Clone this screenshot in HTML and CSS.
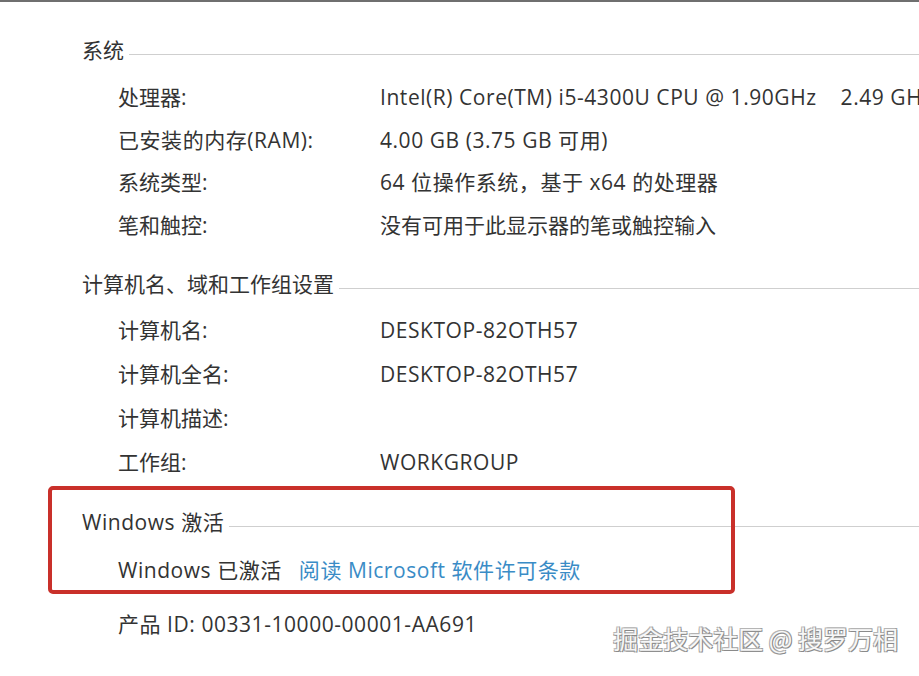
FILE: index.html
```html
<!DOCTYPE html>
<html lang="zh-CN">
<head>
<meta charset="utf-8">
<title>系统</title>
<link rel="stylesheet" href="styles.css">
</head>
<body>
<div class="page">

<div class="group">
<div class="heading"><span class="cjk">系统</span><i class="rule"></i></div>
<div class="rows tight">
<div class="row"><span class="key cjk">处理器:</span><span class="val">Intel(R) Core(TM) i5-4300U CPU @ 1.90GHz    2.49 GHz</span></div>
<div class="row"><span class="key">已安装的内存(RAM):</span><span class="val">4.00 GB (3.75 GB 可用)</span></div>
<div class="row"><span class="key cjk">系统类型:</span><span class="val">64 位操作系统，基于 x64 的处理器</span></div>
<div class="row"><span class="key cjk">笔和触控:</span><span class="val cjk">没有可用于此显示器的笔或触控输入</span></div>
</div>
</div>

<div class="group">
<div class="heading"><span class="cjk">计算机名、域和工作组设置</span><i class="rule"></i></div>
<div class="rows">
<div class="row"><span class="key cjk">计算机名:</span><span class="val">DESKTOP-82OTH57</span></div>
<div class="row"><span class="key cjk">计算机全名:</span><span class="val">DESKTOP-82OTH57</span></div>
<div class="row"><span class="key cjk">计算机描述:</span><span class="val"></span></div>
<div class="row"><span class="key cjk">工作组:</span><span class="val">WORKGROUP</span></div>
</div>
</div>

<div class="group activation">
<div class="marked"></div>
<div class="heading"><span>Windows 激活</span><i class="rule"></i></div>
<div class="rows">
<div class="row single">Windows 已激活<a class="link" href="#">阅读 Microsoft 软件许可条款</a></div>
<div class="row single">产品 ID: 00331-10000-00001-AA691</div>
</div>
</div>

</div>
<div class="watermark">掘金技术社区 @ 搜罗万相</div>
</body>
</html>
```

FILE: styles.css
```css
html, body {
margin: 0;
padding: 0;
background: #fff;
}
body {
border-top: 2px solid #6f6f6f;
height: 674px;
overflow: hidden;
position: relative;
font-family: "Open Sans", "Noto Sans CJK SC", sans-serif;
font-size: 21px;
letter-spacing: 0.55px;
color: #333;
}
.cjk {
letter-spacing: 0;
}
.page {
padding: 33px 0 0 82px;
}
.group {
margin-bottom: 23px;
}
.heading {
display: flex;
align-items: center;
height: 30px;
line-height: 30px;
white-space: nowrap;
}
.rule {
flex: 1;
height: 1px;
margin: 8px 0 0 5px;
background: #cfcfcf;
}
.rows {
padding: 9px 0 0 36px;
}
.tight {
padding-top: 11px;
}
.row {
display: grid;
grid-template-columns: 262px 1fr;
height: 44px;
line-height: 44px;
white-space: pre;
}
.tight .row {
height: 42.5px;
line-height: 42.5px;
}
.row.single {
display: block;
}
.link {
color: #3a8cc6;
text-decoration: none;
margin-left: 17px;
}
.activation {
position: relative;
}
.activation .rows {
padding-top: 11px;
}
.activation .row + .row {
margin-top: 10px;
}
.marked {
position: absolute;
left: -34px;
top: -21px;
width: 679px;
height: 100px;
border: 4px solid #c9302a;
border-radius: 5px;
}
.watermark {
position: absolute;
right: 21px;
bottom: 20px;
font-family: "Noto Sans CJK SC", sans-serif;
font-size: 25px;
color: #f7f7f7;
letter-spacing: 0;
text-shadow: 1px 1px 0 #8a8a8a, -1px -1px 0 #b5b5b5, 1px -1px 0 #a0a0a0, -1px 1px 0 #a0a0a0;
}
```
